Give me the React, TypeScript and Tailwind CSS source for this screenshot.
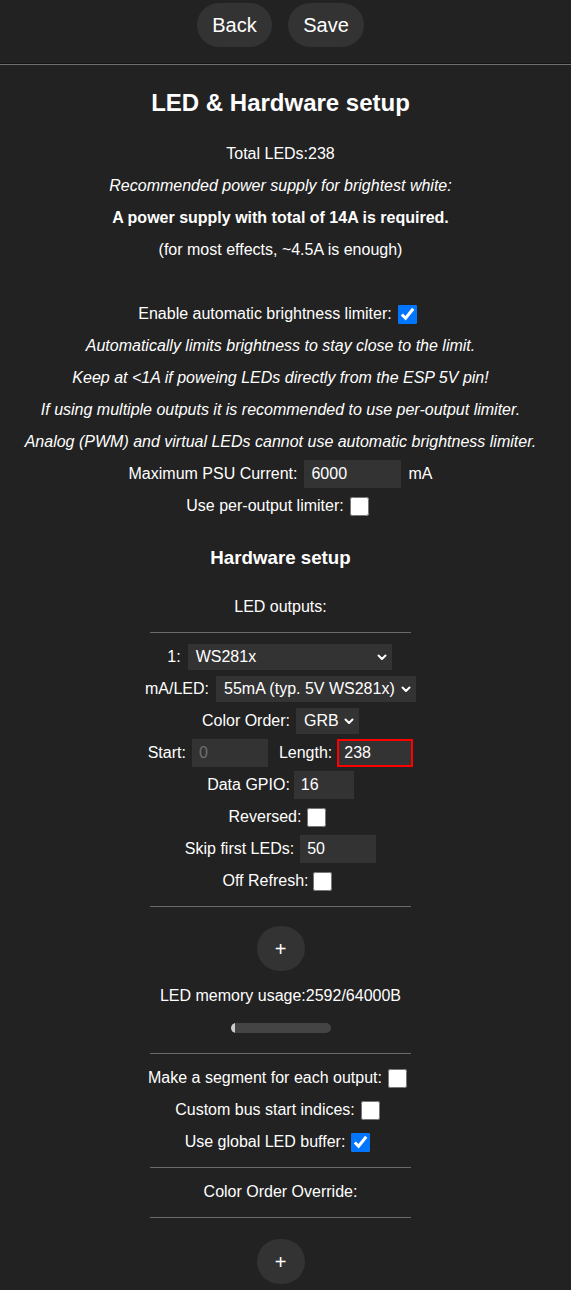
import React from "react";

const Chevron = () => (
  <svg width="10" height="7" viewBox="0 0 10 7" className="shrink-0">
    <polyline points="1.5,1.5 5,5 8.5,1.5" fill="none" stroke="#fff" strokeWidth="2" strokeLinecap="round" strokeLinejoin="round" />
  </svg>
);

const Sel = ({ text, w, cls = "" }: { text: string; w: string; cls?: string }) => (
  <div className={`flex items-center justify-between h-[26px] bg-[#333] pl-[8px] pr-[5px] text-white ${w} ${cls}`}>
    <span className="whitespace-nowrap">{text}</span>
    <Chevron />
  </div>
);

const Inp = ({ v, w, cls = "" }: { v: string; w: string; cls?: string }) => (
  <div className={`h-[28px] bg-[#333] pl-[7px] flex items-center text-left ${w} ${cls}`}>{v}</div>
);

const Cb = ({ checked = false }: { checked?: boolean }) => (
  <input type="checkbox" defaultChecked={checked} className="w-[19px] h-[19px] m-0 mr-[6px] shrink-0" />
);

const Row = ({ children, cls = "" }: { children: React.ReactNode; cls?: string }) => (
  <div className={`flex justify-center items-center h-[32px] whitespace-nowrap ${cls}`}>{children}</div>
);

const Hr = ({ cls = "" }: { cls?: string }) => (
  <div className={`w-[261px] mx-auto h-px bg-[#6a6a6a] ${cls}`} />
);

const Plus = ({ cls = "" }: { cls?: string }) => (
  <div className={`mx-auto w-[48px] h-[45px] rounded-full bg-[#333] flex items-center justify-center text-[20px] ${cls}`}>+</div>
);

export default function App() {
  return (
    <div className="w-[571px] min-h-[1290px] bg-[#222] text-white text-[16px] overflow-hidden" style={{ fontFamily: '"Liberation Sans", Arial, sans-serif' }}>
      <div className="w-[561px] flex justify-center gap-[16px] pt-[3px]">
        <div className="h-[44px] w-[75px] rounded-full bg-[#333] flex items-center justify-center text-[20px]">Back</div>
        <div className="h-[44px] w-[76px] rounded-full bg-[#333] flex items-center justify-center text-[20px]">Save</div>
      </div>
      <div className="mt-[16px] w-full border-t border-t-[#151515] border-b border-b-[#6e6e6e]" />
      <div className="w-[561px] text-center">
        <div className="mt-[22px] h-[32px] leading-[32px] text-[24px] font-bold">LED &amp; Hardware setup</div>
        <div className="mt-[19px] leading-[32px]">
          <div>Total LEDs:238</div>
          <div className="italic">Recommended power supply for brightest white:</div>
          <div className="font-bold">A power supply with total of 14A is required.</div>
          <div>(for most effects, ~4.5A is enough)</div>
          <div className="h-[32px]" />
        </div>
        <Row cls="gap-[6px]">
          <span>Enable automatic brightness limiter:</span>
          <Cb checked />
        </Row>
        <div className="leading-[32px] italic">
          <div>Automatically limits brightness to stay close to the limit.</div>
          <div>Keep at &lt;1A if poweing LEDs directly from the ESP 5V pin!</div>
          <div>If using multiple outputs it is recommended to use per-output limiter.</div>
          <div>Analog (PWM) and virtual LEDs cannot use automatic brightness limiter.</div>
        </div>
        <Row cls="gap-[7px]">
          <span>Maximum PSU Current:</span>
          <Inp v="6000" w="w-[97px]" />
          <span>mA</span>
        </Row>
        <Row cls="gap-[6px]">
          <span>Use per-output limiter:</span>
          <Cb />
        </Row>
        <div className="mt-[20px] h-[32px] leading-[32px] text-[18.72px] font-bold">Hardware setup</div>
        <Row cls="mt-[17px]">
          <span>LED outputs:</span>
        </Row>
        <Hr cls="mt-[9px]" />
        <Row cls="mt-[8px] gap-[7px] pr-[2px]">
          <span>1:</span>
          <Sel text="WS281x" w="w-[204px]" />
        </Row>
        <Row cls="gap-[7px]">
          <span>mA/LED:</span>
          <Sel text="55mA (typ. 5V WS281x)" w="w-[200px]" />
        </Row>
        <Row cls="gap-[6px]">
          <span>Color Order:</span>
          <Sel text="GRB" w="w-[63px]" />
        </Row>
        <Row>
          <span>Start:</span>
          <Inp v="0" w="w-[76px]" cls="ml-[6px] text-[#6f6f6f]" />
          <span className="ml-[11px]">Length:</span>
          <div className="ml-[5px] w-[76px] h-[28px] bg-[#333] border-2 border-[#f00] pl-[5px] flex items-center text-left">238</div>
        </Row>
        <Row cls="gap-[4px]">
          <span>Data GPIO:</span>
          <Inp v="16" w="w-[60px]" cls="pl-[6px]" />
        </Row>
        <Row cls="gap-[6px]">
          <span>Reversed:</span>
          <Cb />
        </Row>
        <Row cls="gap-[6px]">
          <span>Skip first LEDs:</span>
          <Inp v="50" w="w-[76px]" cls="pl-[6px]" />
        </Row>
        <Row cls="gap-[5px]">
          <span>Off Refresh:</span>
          <Cb />
        </Row>
        <Hr cls="mt-[9px]" />
        <Plus cls="mt-[19px]" />
        <Row cls="mt-[9px]">
          <span>LED memory usage:2592/64000B</span>
        </Row>
        <div className="mt-[11px] mx-auto w-[100px] h-[10px] rounded-full bg-[#444] overflow-hidden flex">
          <div className="w-[4px] h-full bg-[#ccc] rounded-l-full" />
        </div>
        <Hr cls="mt-[20px]" />
        <Row cls="mt-[8px] gap-[6px]">
          <span>Make a segment for each output:</span>
          <Cb />
        </Row>
        <Row cls="gap-[6px]">
          <span>Custom bus start indices:</span>
          <Cb />
        </Row>
        <Row cls="gap-[6px]">
          <span>Use global LED buffer:</span>
          <Cb checked />
        </Row>
        <Hr cls="mt-[9px]" />
        <Row cls="mt-[8px]">
          <span>Color Order Override:</span>
        </Row>
        <Hr cls="mt-[9px]" />
        <Plus cls="mt-[21px]" />
      </div>
    </div>
  );
}
